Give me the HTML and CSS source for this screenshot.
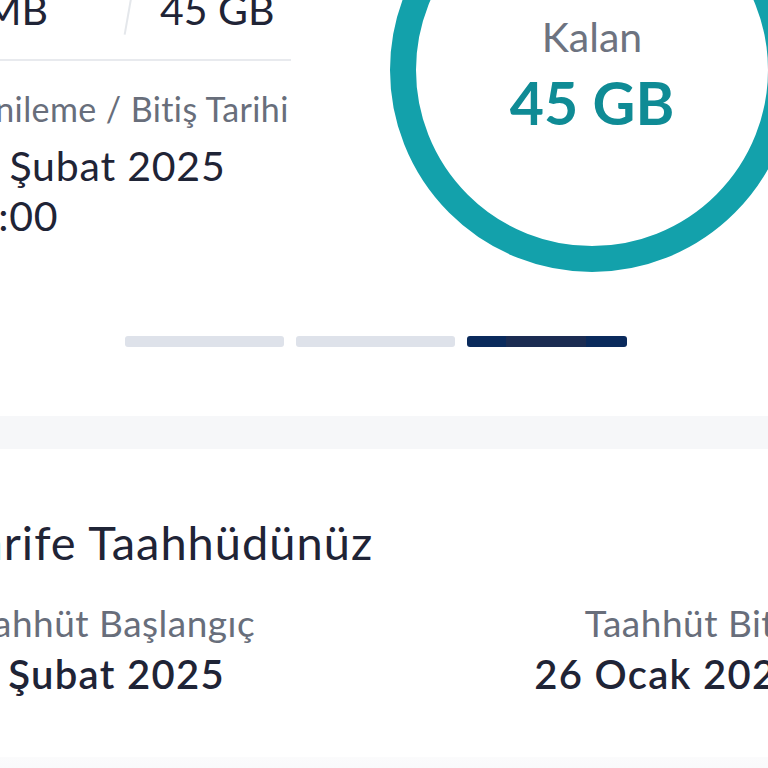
FILE: index.html
```html
<!DOCTYPE html>
<html lang="tr">
<head>
<meta charset="utf-8">
<title>Kalan Kullanım</title>
<link rel="stylesheet" href="styles.css">
</head>
<body>
<div class="screen">
  <section class="usage">
    <div class="usage-info">
      <div class="split-row">
        <span class="split-used"><span>0 MB</span></span>
        <span class="split-divider"></span>
        <span class="split-total">45 GB</span>
      </div>
      <div class="meta-label">Yenileme / Bitiş Tarihi</div>
      <div class="meta-value">26 Şubat 2025</div>
      <div class="meta-value">00:00</div>
    </div>
    <div class="ring">
      <div class="ring-label">Kalan</div>
      <div class="ring-value">45 GB</div>
    </div>
  </section>

  <div class="pager">
    <span class="pager-bar"></span>
    <span class="pager-bar"></span>
    <span class="pager-bar is-active"><span class="pager-glow"></span></span>
  </div>

  <div class="band"></div>

  <section class="commit">
    <h2 class="commit-title">Tarife Taahhüdünüz</h2>
    <div class="commit-row">
      <div class="commit-col">
        <div class="commit-label">Taahhüt Başlangıç</div>
        <div class="commit-value commit-value-start">26 Şubat 2025</div>
      </div>
      <div class="commit-col commit-col-end">
        <div class="commit-label">Taahhüt Bitiş</div>
        <div class="commit-value">26 Ocak 2026</div>
      </div>
    </div>
  </section>

  <div class="band band-bottom"></div>
</div>
</body>
</html>
```

FILE: styles.css
```css
html, body {
  margin: 0;
  padding: 0;
  background: #ffffff;
}

body {
  font-family: "Lato", "Noto Sans", sans-serif;
  color: #1f2436;
  overflow: hidden;
}

.screen {
  width: 768px;
  height: 768px;
  overflow: hidden;
}

/* ---------- usage card ---------- */
.usage {
  display: flex;
  align-items: flex-start;
  margin-top: -132px;
}

.usage-info {
  width: 332px;
  margin-left: -41px;
  padding-top: 118px;
  flex-shrink: 0;
}

.split-row {
  display: flex;
  align-items: center;
  height: 48px;
  padding-bottom: 25px;
  border-bottom: 2px solid #e8eaee;
  font-size: 41px;
  line-height: 48px;
  color: #1f2436;
}

.split-used {
  display: flex;
  justify-content: flex-end;
  width: 89px;
  white-space: nowrap;
  flex-shrink: 0;
}

.split-divider {
  width: 2px;
  height: 50px;
  margin-left: 80px;
  background: #e4e7eb;
  transform: rotate(10deg);
  flex-shrink: 0;
}

.split-total {
  margin-left: 30px;
  white-space: nowrap;
}

.meta-label {
  margin-top: 28px;
  font-size: 34px;
  line-height: 40px;
  letter-spacing: 0.4px;
  color: #686e7b;
  white-space: nowrap;
}

.meta-value {
  margin-left: -10px;
  font-size: 41px;
  line-height: 50px;
  letter-spacing: 0.8px;
  color: #1f2436;
  white-space: nowrap;
}

.meta-label + .meta-value {
  margin-top: 12px;
}

.ring {
  width: 404px;
  height: 404px;
  box-sizing: border-box;
  margin-left: 99px;
  border: 26px solid #13a1ab;
  border-radius: 50%;
  padding-top: 120px;
  display: flex;
  flex-direction: column;
  align-items: center;
  flex-shrink: 0;
}

.ring-label {
  font-size: 41px;
  line-height: 46px;
  color: #6d7380;
}

.ring-value {
  margin-top: 11px;
  font-size: 59px;
  line-height: 64px;
  font-weight: 700;
  color: #0f8b95;
  white-space: nowrap;
}

/* ---------- pager ---------- */
.pager {
  display: flex;
  margin-top: 64px;
  margin-left: 125px;
  gap: 12px;
}

.pager-bar {
  display: flex;
  width: 159px;
  height: 11px;
  border-radius: 3px;
  background: #dee2ea;
}

.pager-bar.is-active {
  width: 160px;
  background: #0a2a5c;
}

.pager-glow {
  width: 80px;
  height: 100%;
  margin-left: 39px;
  background: #1b2c52;
}

/* ---------- bands ---------- */
.band {
  height: 33px;
  margin-top: 69px;
  background: #f6f7f9;
}

.band-bottom {
  margin-top: 61px;
  height: 40px;
  background: linear-gradient(#fbfbfc, #f5f6f8);
}

/* ---------- commitment ---------- */
.commit {
  margin-left: -44px;
  margin-right: -33px;
}

.commit-title {
  margin: 65px 0 0 0;
  font-size: 47px;
  line-height: 56px;
  letter-spacing: 1px;
  font-weight: 400;
  color: #1f2436;
  white-space: nowrap;
}

.commit-row {
  display: flex;
  justify-content: space-between;
  margin-top: 31px;
}

.commit-col-end {
  text-align: right;
}

.commit-label {
  font-size: 37px;
  line-height: 44px;
  letter-spacing: 0.5px;
  color: #686e7b;
  white-space: nowrap;
}

.commit-value {
  margin-top: 7px;
  font-size: 40px;
  line-height: 44px;
  letter-spacing: 1.3px;
  font-weight: 600;
  color: #1f2436;
  white-space: nowrap;
}

.commit-value-start {
  margin-left: -8px;
}
```
